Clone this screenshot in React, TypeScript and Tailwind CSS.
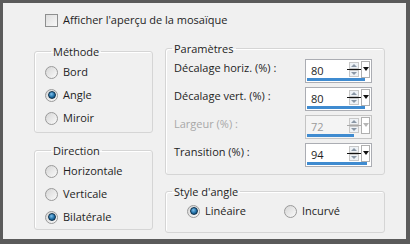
const font = { fontFamily: '"Open Sans", "DejaVu Sans", sans-serif' };

function Radio({ label, checked }: { label: string; checked?: boolean }) {
  return (
    <div className="flex h-[23px] items-center gap-[5px]">
      <div className="flex h-[13px] w-[13px] items-center justify-center rounded-full border border-[#9a9a9a] bg-gradient-to-br from-[#d6d6d6] to-[#fafafa]">
        {checked && (
          <div className="h-[8px] w-[8px] rounded-full border border-[#0e2f4a] bg-[radial-gradient(circle_at_40%_35%,#7fc0ec,#1f6fa6_55%,#0d3d63)]" />
        )}
      </div>
      <span className="text-[#1e1e1e]">{label}</span>
    </div>
  );
}

function Spin({ value, bar, disabled }: { value: string; bar: number; disabled?: boolean }) {
  return (
    <div
      className={
        "relative flex h-[24px] w-[67px] items-center border " +
        (disabled ? "border-[#c4c4c4] bg-[#f4f4f4]" : "border-[#abadb3] bg-white")
      }
    >
      <span className={"ml-[5px] flex-1 leading-none " + (disabled ? "text-[#9a9a9a]" : "text-[#1e1e1e]")}>
        {value}
      </span>
      <div className="mb-[3px] flex w-[13px] flex-col items-center">
        <div className="flex h-[7px] w-[10px] items-center justify-center border border-[#c8c8c8] bg-[#eef2f6]">
          <div className="h-0 w-0 border-x-[3px] border-b-[3px] border-x-transparent border-b-[#8a97a6]" />
        </div>
        <div className={"h-[1px] w-[14px] " + (disabled ? "bg-[#a8a8a8]" : "bg-[#111]")} />
        <div className="flex h-[7px] w-[10px] items-center justify-center border border-[#c8c8c8] bg-[#eef2f6]">
          <div className="h-0 w-0 border-x-[3px] border-t-[3px] border-x-transparent border-t-[#8a97a6]" />
        </div>
      </div>
      <div className="mb-[3px] ml-[1px] mr-[1px] flex h-[17px] w-[9px] items-start justify-center border border-[#b0b0b0] bg-white pt-[5px]">
        <div
          className={
            "h-0 w-0 border-x-[3px] border-t-[4px] border-x-transparent " +
            (disabled ? "border-t-[#b5b5b5]" : "border-t-[#111]")
          }
        />
      </div>
      <div className="absolute bottom-[1px] left-[1px] h-[3px] bg-[#3f8bd0]" style={{ width: bar }} />
    </div>
  );
}

function Row({ label, value, bar, disabled }: { label: string; value: string; bar: number; disabled?: boolean }) {
  return (
    <div className="flex h-[28px] items-center justify-between pl-[8px] pr-[12px]">
      <span className={"-mt-[5px] " + (disabled ? "text-[#a8a8a8]" : "text-[#1e1e1e]")}>{label}</span>
      <Spin value={value} bar={bar} disabled={disabled} />
    </div>
  );
}

function Group({ title, className, children }: { title: string; className: string; children: React.ReactNode }) {
  return (
    <fieldset className={"rounded-[3px] border border-[#d5d5d5] shadow-[inset_1px_1px_0_#fff] " + className}>
      <legend className="ml-[6px] px-[2px] leading-[16px] text-[#1e1e1e]">{title}</legend>
      {children}
    </fieldset>
  );
}

export default function App() {
  return (
    <div className="h-[244px] w-[410px] bg-[#5b5b5b] pb-[5px] pl-[3px] pr-[4px] pt-[3px] text-[11px]" style={font}>
      <div className="h-full bg-[#f0f0f0]">
        <div className="flex items-center gap-[5px] pl-[42px] pt-[9px]">
          <div className="h-[13px] w-[13px] border border-[#8e8f8f] bg-gradient-to-br from-[#dedede] to-[#f8f8f8]" />
          <span className="text-[#1e1e1e]">Afficher l'aperçu de la mosaïque</span>
        </div>
        <div className="mt-[15px] flex gap-[12px] pl-[31px]">
          <div className="flex w-[119px] flex-col gap-[10px]">
            <Group title="Méthode" className="h-[89px] pl-[10px] pt-[1px]">
              <Radio label="Bord" />
              <Radio label="Angle" checked />
              <Radio label="Miroir" />
            </Group>
            <Group title="Direction" className="h-[87px] pl-[10px] pt-[1px]">
              <Radio label="Horizontale" />
              <Radio label="Verticale" />
              <Radio label="Bilatérale" checked />
            </Group>
          </div>
          <div className="-mt-[3px] flex w-[220px] flex-col gap-[9px]">
            <Group title="Paramètres" className="h-[134px]">
              <Row label="Décalage horiz. (%) :" value="80" bar={58} />
              <Row label="Décalage vert. (%) :" value="80" bar={58} />
              <Row label="Largeur (%) :" value="72" bar={47} disabled />
              <Row label="Transition (%) :" value="94" bar={60} />
            </Group>
            <Group title="Style d'angle" className="h-[49px]">
              <div className="flex pl-[21px]">
                <div className="w-[97px]">
                  <Radio label="Linéaire" checked />
                </div>
                <Radio label="Incurvé" />
              </div>
            </Group>
          </div>
        </div>
      </div>
    </div>
  );
}
